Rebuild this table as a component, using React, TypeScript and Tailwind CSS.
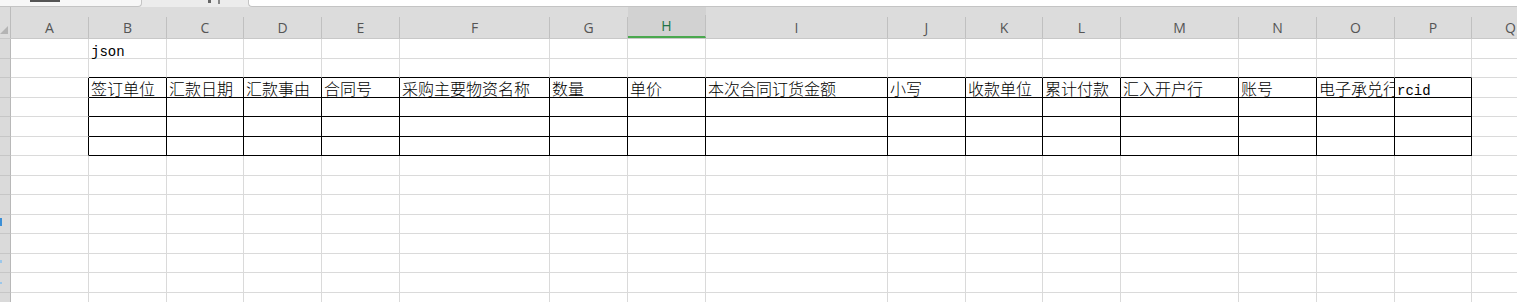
import React from "react"

type Col = { key: string; w: number }

// column widths include the 1px right gridline
const COLS: Col[] = [
  { key: "A", w: 78 },
  { key: "B", w: 78 },
  { key: "C", w: 77 },
  { key: "D", w: 78 },
  { key: "E", w: 78 },
  { key: "F", w: 150 },
  { key: "G", w: 78 },
  { key: "H", w: 78 },
  { key: "I", w: 182 },
  { key: "J", w: 78 },
  { key: "K", w: 77 },
  { key: "L", w: 78 },
  { key: "M", w: 118 },
  { key: "N", w: 78 },
  { key: "O", w: 78 },
  { key: "P", w: 77 },
  { key: "Q", w: 78 },
]

const HEADERS: Record<string, string> = {
  B: "签订单位",
  C: "汇款日期",
  D: "汇款事由",
  E: "合同号",
  F: "采购主要物资名称",
  G: "数量",
  H: "单价",
  I: "本次合同订货金额",
  J: "小写",
  K: "收款单位",
  L: "累计付款",
  M: "汇入开户行",
  N: "账号",
  O: "电子承兑行",
  P: "rcid",
}

const ROW_COUNT = 14
// table block: rows 3..6, columns B..P
const TABLE_ROWS = [3, 4, 5, 6]
const inTableCol = (k: string) => k >= "B" && k <= "P"

const cjk = "font-['Noto_Sans_CJK_SC',sans-serif] font-light text-[16px] leading-[16px] pb-[1px]"
const mono = "font-['Liberation_Mono','Noto_Sans_CJK_SC',monospace] text-[14px] leading-[12px]"

function Cell({ col, row }: { col: Col; row: number }) {
  const tableRow = TABLE_ROWS.includes(row)
  const inTable = tableRow && inTableCol(col.key)
  const blackRight = inTable || (tableRow && col.key === "A")
  const blackBottom = inTable || (row === 2 && inTableCol(col.key))

  let text: React.ReactNode = null
  if (row === 1 && col.key === "B") {
    text = <span className={mono}>json</span>
  } else if (row === 3 && HEADERS[col.key]) {
    text = <span className={col.key === "P" ? mono : cjk}>{HEADERS[col.key]}</span>
  }

  return (
    <div
      className={`flex shrink-0 items-end overflow-x-clip whitespace-nowrap border-r border-b pl-[2px] text-black ${
        blackRight ? "border-r-black" : "border-r-[#dadada]"
      } ${blackBottom ? "border-b-black" : "border-b-[#dadada]"}`}
      style={{ width: col.w }}
    >
      {text}
    </div>
  )
}

function TopStrip() {
  return (
    <div className="flex h-[7px] bg-[#ececec]">
      <div className="relative h-full w-[142px] rounded-br-[4px] border-r border-b border-[#c4c4c4] bg-[#f7f7f7]">
        <div className="absolute left-[30px] top-0 h-[2px] w-[30px] bg-[#555]" />
      </div>
      <div className="relative w-[106px]">
        <div className="absolute left-[66px] top-0 h-[3px] w-[3px] bg-[#666]" />
        <div className="absolute left-[76px] top-0 h-[4px] w-[2px] bg-[#888]" />
      </div>
      <div className="h-full flex-1 rounded-bl-[4px] border-b border-l border-[#c4c4c4] bg-white" />
    </div>
  )
}

function ColumnHeader() {
  return (
    <div className="flex h-[32px] border-b border-[#c8c8c8] bg-[#dcdcdc]">
      <div className="relative w-[11px] shrink-0 border-r border-[#bcbcbc] bg-[#dcdcdc]">
        <div className="absolute bottom-[4px] right-[2px] h-0 w-0 border-b-[8px] border-l-[8px] border-b-[#b4b4b4] border-l-transparent" />
      </div>
      {COLS.map((c) => {
        const active = c.key === "H"
        return (
          <div
            key={c.key}
            className={`flex shrink-0 flex-col ${active ? "bg-[#d2d2d2]" : ""}`}
            style={{ width: c.w }}
          >
            <div className="h-[11px]" />
            <div
              className={`flex flex-1 items-center justify-center border-r font-['Open_Sans',sans-serif] text-[14px] ${
                active
                  ? "border-b-2 border-r-[#c0c0c0] border-b-[#4aa84e] text-[#217346]"
                  : "border-r-[#c0c0c0] text-[#555]"
              }`}
            >
              {c.key}
            </div>
          </div>
        )
      })}
    </div>
  )
}

export default function App() {
  const rows = Array.from({ length: ROW_COUNT }, (_, i) => i + 1)
  return (
    <div className="h-[302px] w-[1517px] overflow-hidden bg-white">
      <TopStrip />
      <ColumnHeader />
      {rows.map((r) => (
        <div key={r} className={`flex ${r % 2 === 1 ? "h-[20px]" : "h-[19px]"}`}>
          <div className="relative w-[11px] shrink-0 border-r border-b border-r-[#b8b8b8] border-b-[#c6c6c6] bg-[#dadada]">
            {r === 10 && <div className="absolute left-0 top-[3px] h-[8px] w-[2px] bg-[#3b8fd6]" />}
            {r === 12 && <div className="absolute left-0 top-[6px] h-[3px] w-[2px] bg-[#9cc7ea]" />}
            {r === 13 && <div className="absolute left-0 top-[9px] h-[2px] w-[2px] bg-[#9cc7ea]" />}
          </div>
          {COLS.map((c) => (
            <Cell key={c.key} col={c} row={r} />
          ))}
        </div>
      ))}
    </div>
  )
}
